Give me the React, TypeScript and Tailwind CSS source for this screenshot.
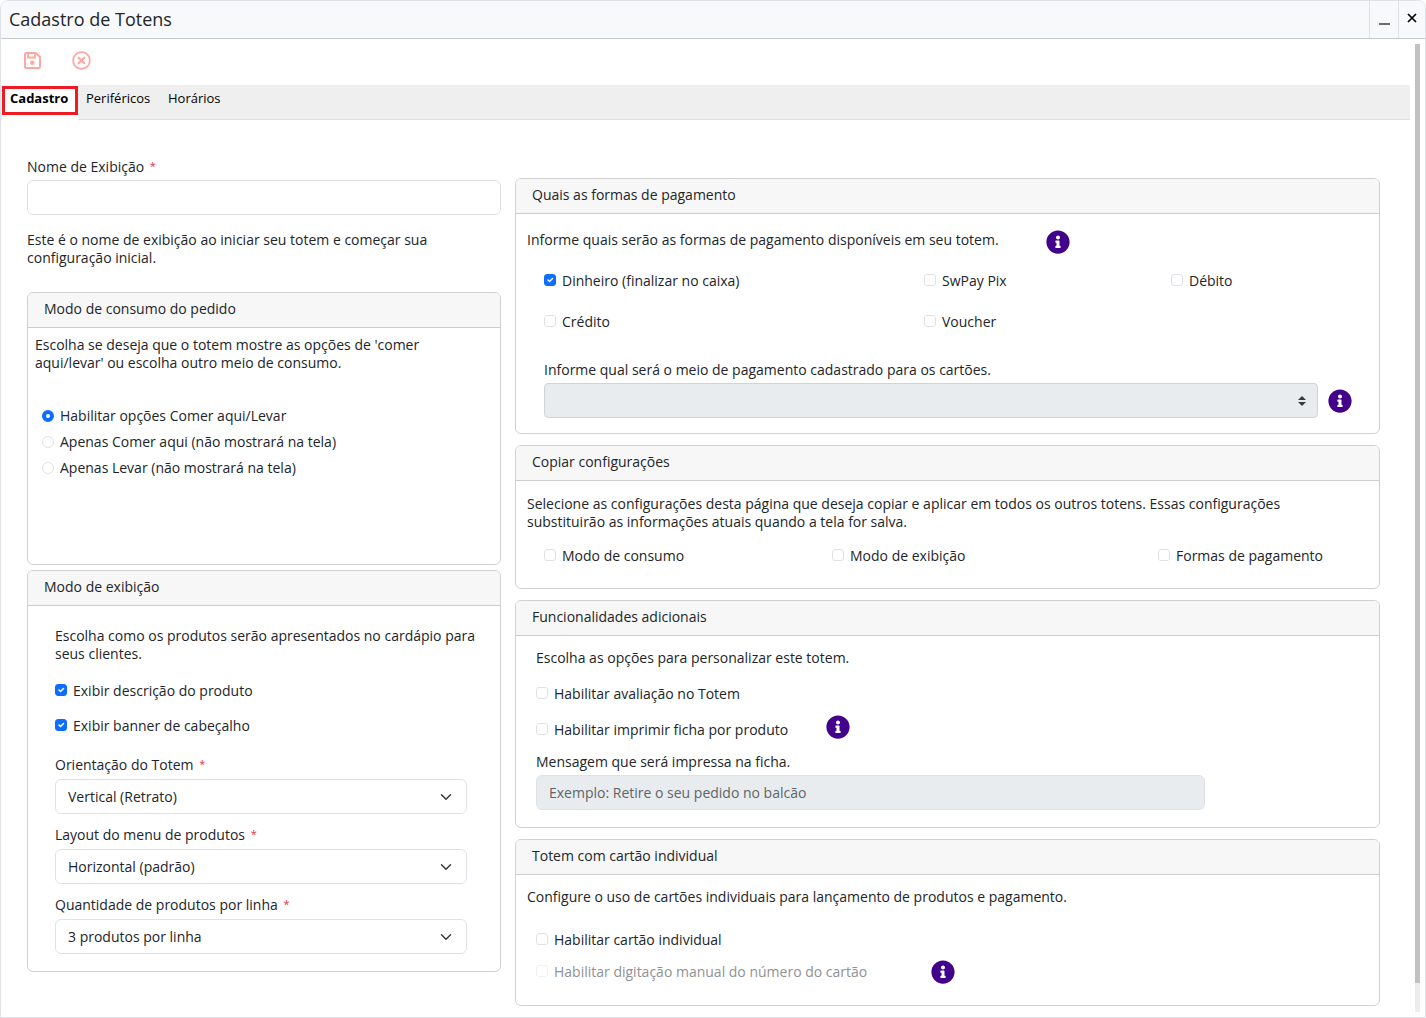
import React, { useState } from "react";
import clsx from "clsx";
import { FaInfoCircle, FaRegTimesCircle } from "react-icons/fa";

type CheckProps = {
  id: string;
  label: string;
  defaultChecked?: boolean;
  disabled?: boolean;
};

const Check = ({ id, label, defaultChecked, disabled }: CheckProps) => (
  <div className="flex items-start gap-1.5">
    <span className="relative mt-0.5 flex shrink-0">
      <input
        id={id}
        type="checkbox"
        defaultChecked={defaultChecked}
        disabled={disabled}
        className="peer size-3 appearance-none rounded-[3px] border border-[#dee2e6] bg-white checked:border-[#0d6efd] checked:bg-[#0d6efd] disabled:opacity-50"
      />
      <svg
        viewBox="0 0 20 20"
        className="pointer-events-none absolute inset-px hidden size-2.5 peer-checked:block"
      >
        <path
          d="m6 10 3 3 6-6"
          fill="none"
          stroke="#fff"
          strokeWidth="3"
          strokeLinecap="round"
          strokeLinejoin="round"
        />
      </svg>
    </span>
    <label htmlFor={id} className={clsx(disabled && "text-[#909294]")}>
      {label}
    </label>
  </div>
);

const SaveIcon = () => (
  <svg viewBox="0 0 17 17" className="size-[17px]" fill="none">
    <path
      d="M2.500 1h9.300L16 5v9.500a1.500 1.500 0 0 1-1.500 1.500h-12A1.500 1.500 0 0 1 1 14.500v-12A1.500 1.500 0 0 1 2.500 1Z"
      stroke="currentColor"
      strokeWidth="2"
      strokeLinejoin="round"
    />
    <path d="M4 1.500v4h7v-4" stroke="currentColor" strokeWidth="1.800" />
    <circle cx="8.300" cy="10.700" r="2.300" fill="currentColor" />
  </svg>
);

const InfoButton = () => (
  <button
    type="button"
    aria-label="Informações"
    className="flex size-6 shrink-0 items-center justify-center text-[#43028a]"
  >
    <FaInfoCircle size={24} />
  </button>
);

const Card = ({
  title,
  className,
  children,
}: {
  title: string;
  className?: string;
  children: React.ReactNode;
}) => (
  <section className="overflow-hidden rounded-md border border-[#d0d0d2]">
    <h2 className="border-b border-[#cdcdcf] bg-[#f7f7f7] px-4 pt-[7px] pb-[9px]">
      {title}
    </h2>
    <div className={className}>{children}</div>
  </section>
);

const Required = () => (
  <span className="ml-0.5 align-top text-[11px] leading-4 text-[#dc3545]">
    *
  </span>
);

const SelectField = ({
  id,
  label,
  options,
}: {
  id: string;
  label: string;
  options: string[];
}) => (
  <div>
    <label htmlFor={id} className="mb-[5px] block">
      {label} <Required />
    </label>
    <div className="relative">
      <select
        id={id}
        className="block h-[35px] w-full appearance-none rounded-md border border-[#dee2e6] bg-white pr-9 pl-3"
      >
        {options.map((option) => (
          <option key={option}>{option}</option>
        ))}
      </select>
      <svg
        viewBox="0 0 16 16"
        className="pointer-events-none absolute top-3 right-[13px] h-3 w-4"
      >
        <path
          d="m2 5 6 6 6-6"
          fill="none"
          stroke="#343a40"
          strokeWidth="2"
          strokeLinecap="round"
          strokeLinejoin="round"
        />
      </svg>
    </div>
  </div>
);

const consumptionModes = [
  "Habilitar opções Comer aqui/Levar",
  "Apenas Comer aqui (não mostrará na tela)",
  "Apenas Levar (não mostrará na tela)",
];

const tabs = ["Cadastro", "Periféricos", "Horários"];

const Tabs = () => {
  const [active, setActive] = useState(tabs[0]);

  return (
    <div
      role="tablist"
      className="flex h-[35px] border-b border-[#dee2e6] bg-[#efefef] pl-px text-[13px]"
    >
      {tabs.map((tab) => (
        <div
          key={tab}
          className={clsx("h-[35px] pt-px", tab === active && "bg-white")}
        >
          <button
            type="button"
            role="tab"
            aria-selected={tab === active}
            onClick={() => setActive(tab)}
            className={clsx(
              "flex h-[29px] items-start border-3 px-[5px] text-black",
              tab === active
                ? "w-[76px] border-[#ed1c24] font-bold"
                : "w-[82px] border-transparent"
            )}
          >
            {tab}
          </button>
        </div>
      ))}
    </div>
  );
};

const App = () => {
  return (
    <div className="flex min-h-screen flex-col overflow-hidden rounded-t-lg border border-[#dee2e6] bg-white font-['Open_Sans',sans-serif] text-[14px] leading-[18px] text-[#212529]">
      {/* Title bar */}
      <header className="flex h-[38px] items-stretch border-b border-[#c8c8cc] bg-[#f8f9fa]">
        <h1 className="flex-1 self-center pb-0.5 pl-2 text-[18px] leading-6">
          Cadastro de Totens
        </h1>
        <button
          type="button"
          aria-label="Minimizar"
          className="flex w-[29px] items-center justify-center border-l border-[#dee2e6]"
        >
          <span className="mt-2 h-0.5 w-[11px] bg-[#6c6c70]" />
        </button>
        <button
          type="button"
          aria-label="Fechar"
          className="flex w-[27px] items-center justify-center border-l border-[#dee2e6] pb-1"
        >
          <svg viewBox="0 0 10 10" className="size-2.5">
            <path d="m1 1 8 8m0-8-8 8" stroke="#000" strokeWidth="1.700" />
          </svg>
        </button>
      </header>

      <div className="flex flex-1 gap-[5px] pr-[5px]">
        <main className="min-w-0 flex-1">
          {/* Toolbar */}
          <div className="flex h-[46px] items-center gap-[31px] pb-1 pl-[23px] text-[#ffa8a1]">
            <button type="button" aria-label="Salvar">
              <SaveIcon />
            </button>
            <button type="button" aria-label="Cancelar">
              <FaRegTimesCircle size={19} />
            </button>
          </div>

          <Tabs />

          <form className="grid grid-cols-[474fr_865fr] gap-3.5 pt-[38px] pr-[30px] pb-2 pl-[26px]">
            {/* Left column */}
            <div>
              <label htmlFor="displayName" className="mb-1 block">
                Nome de Exibição <Required />
              </label>
              <input
                id="displayName"
                type="text"
                className="mb-4 block h-[35px] w-full rounded-md border border-[#dee2e6] px-3"
              />
              <p className="mb-[25px] pr-14">
                Este é o nome de exibição ao iniciar seu totem e começar sua
                configuração inicial.
              </p>

              <div className="flex flex-col gap-[5px]">
                <Card
                  title="Modo de consumo do pedido"
                  className="min-h-[236px] px-[7px] pt-2"
                >
                  <p className="mb-[35px] pr-14">
                    Escolha se deseja que o totem mostre as opções de 'comer
                    aqui/levar' ou escolha outro meio de consumo.
                  </p>
                  <div className="flex flex-col gap-2 pl-[7px]">
                    {consumptionModes.map((mode, index) => (
                      <label key={mode} className="flex items-center gap-1.5">
                        <input
                          type="radio"
                          name="consumptionMode"
                          defaultChecked={index === 0}
                          className="size-3 appearance-none rounded-full border border-[#dee2e6] checked:border-4 checked:border-[#0d6efd]"
                        />
                        {mode}
                      </label>
                    ))}
                  </div>
                </Card>

                <Card
                  title="Modo de exibição"
                  className="pt-[21px] pr-[17px] pb-[17px] pl-[27px]"
                >
                  <p className="mb-[19px]">
                    Escolha como os produtos serão apresentados no cardápio para
                    seus clientes.
                  </p>
                  <div className="mb-[21px] flex flex-col gap-[17px]">
                    <Check
                      id="showDescription"
                      label="Exibir descrição do produto"
                      defaultChecked
                    />
                    <Check
                      id="showBanner"
                      label="Exibir banner de cabeçalho"
                      defaultChecked
                    />
                  </div>
                  <div className="flex flex-col gap-3 pr-4">
                    <SelectField
                      id="orientation"
                      label="Orientação do Totem"
                      options={["Vertical (Retrato)", "Horizontal (Paisagem)"]}
                    />
                    <SelectField
                      id="menuLayout"
                      label="Layout do menu de produtos"
                      options={["Horizontal (padrão)", "Vertical"]}
                    />
                    <SelectField
                      id="perRow"
                      label="Quantidade de produtos por linha"
                      options={["3 produtos por linha", "2 produtos por linha"]}
                    />
                  </div>
                </Card>
              </div>
            </div>

            {/* Right column */}
            <div className="flex flex-col gap-[11px] pt-5">
              <Card
                title="Quais as formas de pagamento"
                className="pt-4 pr-[27px] pb-[15px] pl-[11px]"
              >
                <div className="mb-[18px] flex items-start">
                  <p className="w-[519px] leading-5">
                    Informe quais serão as formas de pagamento disponíveis em
                    seu totem.
                  </p>
                  <InfoButton />
                </div>
                <div className="pl-[17px]">
                  <div className="mb-[30px] grid grid-cols-[380px_247px_1fr] gap-y-[23px]">
                    <Check
                      id="cash"
                      label="Dinheiro (finalizar no caixa)"
                      defaultChecked
                    />
                    <Check id="pix" label="SwPay Pix" />
                    <Check id="debit" label="Débito" />
                    <Check id="credit" label="Crédito" />
                    <Check id="voucher" label="Voucher" />
                  </div>
                  <label htmlFor="cardMethod" className="mb-1 block">
                    Informe qual será o meio de pagamento cadastrado para os
                    cartões.
                  </label>
                  <div className="flex items-center gap-2.5">
                    <div className="relative flex-1">
                      <select
                        id="cardMethod"
                        disabled
                        className="block h-[35px] w-full appearance-none rounded border border-[#ced4da] bg-[#e9ecef] px-3"
                      />
                      <svg
                        viewBox="0 0 4 5"
                        className="pointer-events-none absolute top-[13px] right-3 h-2.5 w-2"
                      >
                        <path fill="#343a40" d="M2 0 0 2h4zm0 5L0 3h4z" />
                      </svg>
                    </div>
                    <InfoButton />
                  </div>
                </div>
              </Card>

              <Card
                title="Copiar configurações"
                className="px-[11px] pt-[14px] pb-[23px]"
              >
                <p className="mb-4 pr-16">
                  Selecione as configurações desta página que deseja copiar e
                  aplicar em todos os outros totens. Essas configurações
                  substituirão as informações atuais quando a tela for salva.
                </p>
                <div className="grid grid-cols-[288px_326px_1fr] pl-[17px]">
                  <Check id="copyConsumption" label="Modo de consumo" />
                  <Check id="copyDisplay" label="Modo de exibição" />
                  <Check id="copyPayment" label="Formas de pagamento" />
                </div>
              </Card>

              <Card
                title="Funcionalidades adicionais"
                className="px-5 pt-[13px] pb-[17px]"
              >
                <p className="mb-[18px]">
                  Escolha as opções para personalizar este totem.
                </p>
                <Check id="rating" label="Habilitar avaliação no Totem" />
                <div className="mt-3 mb-3.5 grid grid-cols-[290px_24px] items-end">
                  <Check
                    id="printTicket"
                    label="Habilitar imprimir ficha por produto"
                  />
                  <InfoButton />
                </div>
                <label htmlFor="ticketMessage" className="mb-1 block">
                  Mensagem que será impressa na ficha.
                </label>
                <input
                  id="ticketMessage"
                  type="text"
                  disabled
                  placeholder="Exemplo: Retire o seu pedido no balcão"
                  className="block h-[35px] w-[669px] max-w-full rounded-md border border-[#dee2e6] bg-[#e9ecef] px-3 placeholder:text-[#5e6468]"
                />
              </Card>

              <Card
                title="Totem com cartão individual"
                className="px-[11px] pt-[13px] pb-[21px]"
              >
                <p className="mb-[25px]">
                  Configure o uso de cartões individuais para lançamento de
                  produtos e pagamento.
                </p>
                <div className="flex flex-col gap-[11px] pl-[9px]">
                  <Check id="card" label="Habilitar cartão individual" />
                  <div className="grid grid-cols-[395px_24px] items-center">
                    <Check
                      id="manualCard"
                      label="Habilitar digitação manual do número do cartão"
                      disabled
                    />
                    <InfoButton />
                  </div>
                </div>
              </Card>
            </div>
          </form>
        </main>

        {/* Scroll track */}
        <div className="my-[5px] w-[5px] bg-[#ededed]">
          <div className="h-[97%] bg-[#c1c1c1]" />
        </div>
      </div>
    </div>
  );
};

export default App;
